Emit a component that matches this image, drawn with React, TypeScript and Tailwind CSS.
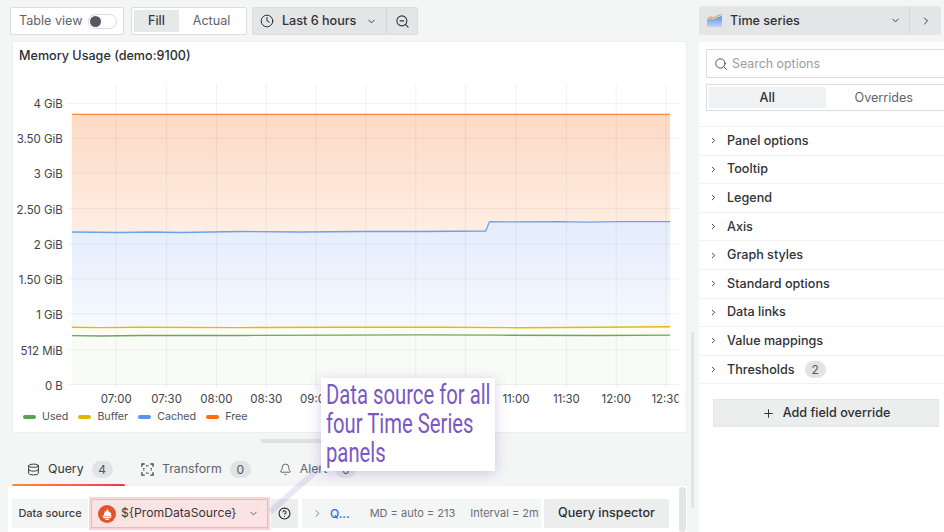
import React from 'react';
import { ChevronDown, ChevronRight, Clock, Database, Bell, HelpCircle, Plus, Search, ZoomOut } from 'lucide-react';

const Y_TICKS: [string, number][] = [
  ['4 GiB', 103], ['3.50 GiB', 138], ['3 GiB', 173], ['2.50 GiB', 208.5], ['2 GiB', 244],
  ['1.50 GiB', 279], ['1 GiB', 314], ['512 MiB', 350], ['0 B', 385],
];
// the 09:30 - 10:30 labels sit behind the annotation box, so only their grid lines show
const X_TICKS: [string, number][] = [
  ['07:00', 115.5], ['07:30', 166], ['08:00', 216], ['08:30', 266], ['09:00', 316], ['', 366],
  ['', 416], ['', 466], ['11:00', 516.5], ['11:30', 567], ['12:00', 617], ['12:30', 667],
];
const LEGEND = [
  { name: 'Used', color: 'bg-[#56a64b]' },
  { name: 'Buffer', color: 'bg-[#e0b400]' },
  { name: 'Cached', color: 'bg-[#5794f2]' },
  { name: 'Free', color: 'bg-[#ff6a0a]' },
];
const OPTIONS = ['Panel options', 'Tooltip', 'Legend', 'Axis', 'Graph styles', 'Standard options', 'Data links', 'Value mappings', 'Thresholds'];

const CACHED = '71,232 120,232.5 150,232 180,232.500 240,231.5 300,232 360,231.5 420,231.5 486,231 490,221.5 510,221.800 560,221.5 585,222 620,221.5 671,221.5';

function MemoryChart() {
  return (
    <svg viewBox="12 70 675 335" className="w-full h-[335px] block" fontFamily="Inter, sans-serif">
      <defs>
        <linearGradient id="free" x1="0" y1="0" x2="0" y2="1">
          <stop offset="0" stopColor="#fddac5" />
          <stop offset="1" stopColor="#feeee3" />
        </linearGradient>
        <linearGradient id="cached" x1="0" y1="0" x2="0" y2="1">
          <stop offset="0" stopColor="#e4edfc" />
          <stop offset="1" stopColor="#f6f9ff" />
        </linearGradient>
        <clipPath id="xlabels">
          <rect x="12" y="70" width="667.500" height="335" />
        </clipPath>
      </defs>
      <polygon points="71,114 671,114 671,221.5 490,221.5 486,231 71,232" fill="url(#free)" />
      <polygon points={`${CACHED} 671,327 71,327`} fill="url(#cached)" />
      <rect x="71" y="327" width="600" height="8.500" fill="#fefdf3" />
      <rect x="71" y="335.500" width="600" height="49.500" fill="#f9fbf7" />
      {Y_TICKS.map(([label, y]) => (
        <g key={label}>
          <line x1="67" x2="680" y1={y} y2={y} stroke="#000" strokeOpacity="0.06" />
          <text x="62" y={y + 5} textAnchor="end" fontSize="11.5" fill="#3f4248">{label}</text>
        </g>
      ))}
      <g clipPath="url(#xlabels)">
        {X_TICKS.map(([label, x]) => (
          <g key={x}>
            <line x1={x} x2={x} y1="83" y2="389" stroke="#000" strokeOpacity="0.06" />
            {label && <text x={x} y="403" textAnchor="middle" fontSize="11.5" fill="#3f4248">{label}</text>}
          </g>
        ))}
      </g>
      <line x1="71" x2="671" y1="114" y2="114" stroke="#ff8a3d" strokeWidth="1.3" />
      <polyline points={CACHED} fill="none" stroke="#6f9fe8" strokeWidth="1.3" />
      <polyline points="71,327.5 100,327.800 140,327.500 240,327.800 340,327.500 440,327.500 520,328 600,327.500 671,327" fill="none" stroke="#e3b90f" strokeWidth="1.3" />
      <polyline points="71,336 100,336.300 140,335.800 240,335.800 340,335.500 420,335.200 500,335.500 600,335.800 671,335.500" fill="none" stroke="#6aa85f" strokeWidth="1.3" />
    </svg>
  );
}

function Badge({ children }: { children: React.ReactNode }) {
  return <span className="h-[17px] min-w-[21px] px-[6px] rounded-full bg-[#e2e3e5] text-[12px] leading-[17px] text-center text-[#55585e]">{children}</span>;
}

function TransformIcon() {
  return (
    <svg width="13" height="13" viewBox="0 0 14 14" fill="none" stroke="#4a4d52" strokeWidth="1.5">
      <path d="M1 4V1h3M10 1h3v3M13 10v3h-3M4 13H1v-3" />
      <path d="M5.5 3h3M5.5 11h3M3 5.5v3M11 5.5v3" strokeDasharray="1.5 1" />
    </svg>
  );
}

function PromIcon() {
  return (
    <svg width="18" height="18" viewBox="0 0 18 18" className="shrink-0">
      <circle cx="9" cy="9" r="9" fill="#e6522c" />
      <path d="M4 11.4h10l-1-1.6c.3-1.6-.6-2.6-1.3-3.4-.1.8-.5 1.2-.9 1.3.2-1.700-.7-3.300-1.900-4 .2 1.400-.6 2.300-1.200 3.100-.2-.4-.4-.7-.8-.9 0 1.500-1.300 2.300-.9 3.900z" fill="#fff" />
      <rect x="5" y="12" width="8" height="1.100" fill="#fff" />
      <path d="M6.500 13.700h5c-.3.800-1.300 1.300-2.500 1.300s-2.200-.5-2.500-1.300z" fill="#fff" />
    </svg>
  );
}

function VizIcon() {
  return (
    <svg width="15" height="13" viewBox="0 0 15 13">
      <defs>
        <linearGradient id="viz" x1="0" y1="0" x2="0" y2="1">
          <stop offset="0" stopColor="#5b8fe8" />
          <stop offset="1" stopColor="#c5d6f2" />
        </linearGradient>
      </defs>
      <path d="M0 6l4-1.500 3 1 4-2.500 4-1V13H0z" fill="url(#viz)" />
      <path d="M0 5l4-2 3 1 4-2.500 4-1" fill="none" stroke="#f2a53a" strokeWidth="1.200" />
    </svg>
  );
}

export default function App() {
  return (
    <div className="w-[944px] h-[532px] overflow-hidden bg-[#f4f5f5] flex font-['Inter',sans-serif] text-[#24292e] relative">
      {/* Left column */}
      <div className="w-[699px] shrink-0 flex flex-col">
        <div className="flex items-center h-[41px] pl-[10px] pt-[1px]">
          <div className="h-[28px] w-[114px] flex items-center justify-between pl-[8px] pr-[6px] bg-white border border-[#dcdddf] rounded-[2px]">
            <span className="text-[12.6px] text-[#60646b] pt-[1px]">Table view</span>
            <span className="w-[29px] h-[15px] rounded-full border border-[#d8d9db] flex items-center pl-[1px]">
              <span className="w-[11px] h-[11px] rounded-full bg-[#55585e]" />
            </span>
          </div>
          <div className="h-[28px] w-[116px] ml-[7px] flex p-[2px] bg-white border border-[#dcdddf] rounded-[2px] text-[12.6px]">
            <span className="w-[45px] flex items-center justify-center bg-[#e7e8ea] font-medium text-[#3a3d42] pt-[1px]">Fill</span>
            <span className="flex-1 flex items-center justify-center text-[#60646b] pt-[1px]">Actual</span>
          </div>
          <div className="h-[28px] w-[166px] ml-[5px] flex items-center bg-[#e4e5e7] border border-[#dcdddf] rounded-[2px] text-[#2f3237]">
            <div className="flex items-center flex-1 pl-[7px] border-r border-[#d2d3d6] h-full">
              <Clock size={14} strokeWidth={1.7} />
              <span className="ml-[8px] text-[12.6px] font-medium pt-[1px]">Last 6 hours</span>
              <ChevronDown size={11} strokeWidth={2} className="ml-[10px]" />
            </div>
            <div className="w-[30px] flex items-center justify-center">
              <ZoomOut size={15} strokeWidth={1.7} />
            </div>
          </div>
        </div>

        <div className="ml-[12px] w-[675px] h-[392px] bg-white border border-[#eceded] overflow-hidden shrink-0">
          <div className="h-[28px] pl-[6px] pt-[5px] text-[12.6px] font-medium text-[#2c2f34]">Memory Usage (demo:9100)</div>
          <MemoryChart />
          <div className="flex items-center h-[24px] pl-[10px] gap-[10px] text-[10.7px] text-[#50535a]">
            {LEGEND.map(item => (
              <div key={item.name} className="flex items-center gap-[6px]">
                <span className={`w-[13px] h-[4px] rounded-full ${item.color}`} />
                <span>{item.name}</span>
              </div>
            ))}
          </div>
        </div>

        <div className="ml-[261px] mt-[6px] w-[120px] h-[4px] rounded-full bg-[#dfe0e2] shrink-0" />

        <div className="flex items-center h-[34px] mt-[9px] ml-[12px] text-[12.3px] text-[#60646b] shrink-0">
          <div className="flex items-center w-[113px] gap-[8px] h-full relative pl-[15px] text-[#35383d]">
            <Database size={13} strokeWidth={1.8} />
            <span>Query</span>
            <Badge>4</Badge>
            <span className="absolute left-0 right-0 bottom-[-1px] h-[3px] rounded-full bg-gradient-to-r from-[#ff8a2b] to-[#f2304f]" />
          </div>
          <div className="flex items-center gap-[8px] ml-[16px]">
            <TransformIcon />
            <span>Transform</span>
            <Badge>0</Badge>
          </div>
          <div className="flex items-center gap-[8px] ml-[28px]">
            <Bell size={13} strokeWidth={1.8} />
            <span>Alert</span>
            <Badge>0</Badge>
          </div>
        </div>

        <div className="ml-[8px] w-[679px] flex-1 bg-white flex items-start pl-[4px] pt-[13px] text-[12px] relative">
          <div className="h-[29px] w-[76px] shrink-0 flex items-center justify-center bg-[#f4f5f5] font-medium text-[11px] text-[#3a3d42]">Data source</div>
          <div className="h-[33px] w-[181px] shrink-0 ml-[1px] -mt-[2px] flex items-center pl-[7px] pr-[9px] bg-[#fbe3e3] border-2 border-[#fbd5d5] outline outline-1 -outline-offset-3 outline-[#eeb9b9]">
            <PromIcon />
            <span className="ml-[5px] text-[12.2px] text-[#34373c] whitespace-nowrap">{'${PromDataSource}'}</span>
            <ChevronDown size={11} className="ml-auto text-[#55585e]" />
          </div>
          <div className="h-[29px] w-[27px] shrink-0 ml-[1px] flex items-center justify-center bg-[#eceded]">
            <HelpCircle size={13} strokeWidth={2} />
          </div>
          <div className="h-[29px] w-[239px] shrink-0 ml-[4px] flex items-center bg-[#f4f5f5] pl-[10px] text-[11px] text-[#6b6f76] whitespace-nowrap">
            <ChevronRight size={11} />
            <span className="ml-[7px] text-[12px] text-[#2f6fe0] font-medium">Q...</span>
            <span className="ml-[20px]">MD = auto = 213</span>
            <span className="ml-[15px]">Interval = 2m</span>
          </div>
          <div className="h-[29px] w-[125px] shrink-0 ml-[3px] flex items-center justify-center bg-[#eceded] text-[12.6px] font-medium text-[#2c2f34] rounded-[2px]">Query inspector</div>
          <span className="absolute right-[1px] top-[1px] bottom-0 w-[7px] rounded-full bg-[#e4e5e7]" />
        </div>
      </div>

      {/* Right column */}
      <div className="flex-1 flex flex-col min-w-0">
        <div className="h-[29px] w-[242px] mt-[6px] flex items-center bg-[#e4e5e7] rounded-[2px] shrink-0 text-[#2f3237]">
          <div className="flex-1 h-full flex items-center pl-[8px] border-r border-[#d6d7da]">
            <VizIcon />
            <span className="ml-[8px] text-[12.6px] font-medium pt-[1px]">Time series</span>
            <ChevronDown size={11} strokeWidth={2} className="ml-auto mr-[8px]" />
          </div>
          <div className="w-[31px] flex items-center justify-center">
            <ChevronRight size={12} strokeWidth={2} />
          </div>
        </div>
        <div className="mt-[7px] flex-1 bg-white flex flex-col">
          <div className="pl-[7px] pt-[7px]">
            <div className="h-[29px] flex items-center pl-[7px] bg-white border border-[#dcdddf] border-r-0 rounded-l-[2px]">
              <Search size={14} strokeWidth={1.7} className="text-[#4a4d52]" />
              <span className="ml-[4px] text-[12.4px] text-[#9a9da3] pt-[1px]">Search options</span>
            </div>
            <div className="mt-[6px] h-[27px] flex p-[2px] border border-[#dcdddf] border-r-0 text-[12.6px]">
              <span className="w-[117px] flex items-center justify-center bg-[#f1f2f3] font-medium text-[#2c2f34] pt-[1px]">All</span>
              <span className="w-[117px] flex items-center justify-center text-[#60646b] pt-[1px]">Overrides</span>
            </div>
          </div>
          <div className="mt-[15px] border-t border-[#f0f1f2]">
            {OPTIONS.map(name => (
              <div key={name} className="h-[28.6px] flex items-center border-b border-[#f0f1f2] pl-[10px] text-[12.6px] text-[#2f3237]">
                <ChevronRight size={9} strokeWidth={2.500} />
                <span className="ml-[9px] font-medium pt-[1px]">{name}</span>
                {name === 'Thresholds' && <span className="ml-[10px] flex"><Badge>2</Badge></span>}
              </div>
            ))}
          </div>
          <div className="mt-[15px] mx-[14px] w-[226px] h-[28px] flex items-center justify-center bg-[#eceded] border border-[#e4e5e7] text-[12.6px] font-medium text-[#2c2f34]">
            <Plus size={13} strokeWidth={1.8} />
            <span className="ml-[8px]">Add field override</span>
          </div>
        </div>
      </div>

      {/* Scrollbar between the columns */}
      <span className="absolute left-[691px] top-[332px] h-[176px] w-[3px] rounded-full bg-[#e2e3e5]" />

      {/* Annotation laid over the screenshot */}
      <svg className="absolute left-[262px] top-[450px] pointer-events-none" width="70" height="70" viewBox="0 0 70 70">
        <path d="M8 62L62 14" stroke="#7e5bc8" strokeOpacity="0.15" strokeWidth="6" />
      </svg>
      <div className="absolute left-[321px] top-[378px] w-[174px] h-[93px] bg-white shadow-[0_2px_12px_rgba(90,60,180,0.25)] pl-[5px] pt-[3px] overflow-hidden">
        <div className="w-[230px] origin-top-left scale-x-[0.75] font-['Roboto',sans-serif] text-[27px] leading-[29px] text-[#7a58c4] whitespace-nowrap">
          Data source for all<br />four Time Series<br />panels
        </div>
      </div>
    </div>
  );
}
